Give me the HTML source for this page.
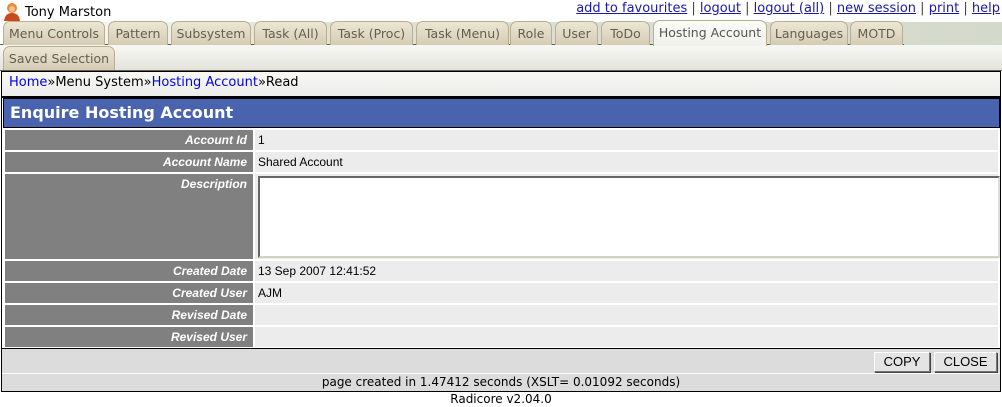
<!DOCTYPE html>
<html><head><style>
*{margin:0;padding:0;box-sizing:border-box}
body{width:1002px;height:407px;background:#fff;position:relative;overflow:hidden;font-family:"DejaVu Sans",Verdana,sans-serif;font-size:12px}
.a{position:absolute}
.tab{position:absolute;height:24px;border:1px solid #b8ae94;border-bottom:none;border-radius:7px 7px 0 0;background:linear-gradient(#ece6d4,#d4ccb4);color:#665e4c;font-size:12.5px;line-height:23px;text-align:center;white-space:nowrap}
.tab.act{background:linear-gradient(#fafaf6,#f2f2ec);color:#555;height:26px}
.lbl{position:absolute;left:5px;width:248px;background:#808080;color:#fff;font:italic bold 12px "Liberation Sans",Arial,sans-serif;text-align:right;padding-right:6px}
.val{position:absolute;left:255px;width:743px;background:#ececec;font:12px "Liberation Sans",Arial,sans-serif;padding-left:3px}
.btn{position:absolute;top:352px;height:20px;border:1px solid #777;border-top-color:#fff;border-left-color:#fff;background:#e4e4e4;box-shadow:1px 1px 0 #444;font:13px "Liberation Sans",Arial,sans-serif;text-align:center;line-height:18px}
a{color:#0000ee}
.tl{color:#1a1aa6;text-decoration:underline}
</style></head><body>
<svg class="a" style="left:3px;top:2px" width="18" height="19" viewBox="0 0 18 19"><circle cx="9" cy="6" r="5" fill="#e88a3a"/><path d="M1 19 Q2 11 9 11 Q16 11 17 19Z" fill="#c84a1c"/><circle cx="9" cy="7" r="3" fill="#f4c08a"/></svg>
<div class="a" style="left:25px;top:5px;font-size:13px">Tony Marston</div>
<div class="a" style="right:2px;top:1px;font-size:13px;color:#444;word-spacing:0"><span class="tl">add to favourites</span> | <span class="tl">logout</span> | <span class="tl">logout (all)</span> | <span class="tl">new session</span> | <span class="tl">print</span> | <span class="tl">help</span></div>
<div class="a" style="left:0;top:22px;width:1002px;height:23px;background:linear-gradient(90deg,#fff,#dfe3d6 30%,#d4dacb)"></div>
<div class="a" style="left:0;top:45px;width:1002px;height:26px;background:linear-gradient(#f7f7f4,#e4e4de);border-bottom:1px solid #6b5e44"></div>
<div class="a" style="left:0;top:44px;width:653px;height:1px;background:#6b5e44"></div>
<div class="a" style="left:767px;top:44px;width:137px;height:1px;background:#6b5e44"></div>
<div class="tab" style="left:3px;top:21px;width:102px">Menu Controls</div>
<div class="tab" style="left:108px;top:21px;width:60px">Pattern</div>
<div class="tab" style="left:171px;top:21px;width:80px">Subsystem</div>
<div class="tab" style="left:254px;top:21px;width:73px">Task (All)</div>
<div class="tab" style="left:330px;top:21px;width:83px">Task (Proc)</div>
<div class="tab" style="left:416px;top:21px;width:93px">Task (Menu)</div>
<div class="tab" style="left:510px;top:21px;width:42px">Role</div>
<div class="tab" style="left:555px;top:21px;width:43px">User</div>
<div class="tab" style="left:601px;top:21px;width:49px">ToDo</div>
<div class="tab act" style="left:653px;top:20px;width:114px">Hosting Account</div>
<div class="tab" style="left:770px;top:21px;width:78px">Languages</div>
<div class="tab" style="left:850px;top:21px;width:53px">MOTD</div>
<div class="tab" style="left:3px;top:46px;width:112px">Saved Selection</div>
<div class="a" style="left:1px;top:71px;width:1000px;height:26px;border:1px solid #000;background:linear-gradient(#f8f8f4,#ececea);font-size:13px;line-height:22px;padding-left:7px"><a>Home</a>»Menu System»<a>Hosting Account</a>»Read</div>
<div class="a" style="left:1px;top:97px;width:1000px;height:295px;border:1px solid #000;background:#fff"></div>
<div class="a" style="left:3px;top:98px;width:997px;height:30px;background:#4a63ae;border:1px solid #000;color:#fff;font-weight:bold;font-size:16px;line-height:28px;padding-left:6px">Enquire Hosting Account</div>
<div class="lbl" style="top:130px;height:20px;line-height:20px">Account Id</div><div class="val" style="top:130px;height:20px;line-height:20px">1</div>
<div class="lbl" style="top:152px;height:20px;line-height:20px">Account Name</div><div class="val" style="top:152px;height:20px;line-height:20px">Shared Account</div>
<div class="lbl" style="top:174px;height:85px;line-height:20px">Description</div><div class="val" style="top:174px;height:85px"></div>
<div class="a" style="left:258px;top:176px;width:742px;height:82px;background:#fff;border:2px solid #666;border-right-color:#ddd;border-bottom-color:#d4d0c0"></div>
<div class="lbl" style="top:261px;height:20px;line-height:20px">Created Date</div><div class="val" style="top:261px;height:20px;line-height:20px">13 Sep 2007 12:41:52</div>
<div class="lbl" style="top:283px;height:20px;line-height:20px">Created User</div><div class="val" style="top:283px;height:20px;line-height:20px">AJM</div>
<div class="lbl" style="top:305px;height:20px;line-height:20px">Revised Date</div><div class="val" style="top:305px;height:20px"></div>
<div class="lbl" style="top:327px;height:20px;line-height:20px">Revised User</div><div class="val" style="top:327px;height:20px"></div>
<div class="a" style="left:2px;top:348px;width:998px;height:1px;background:#000"></div>
<div class="a" style="left:2px;top:349px;width:998px;height:24px;background:#dcdcdc"></div>
<div class="btn" style="left:874px;width:56px">COPY</div>
<div class="btn" style="left:934px;width:63px">CLOSE</div>
<div class="a" style="left:2px;top:374px;width:998px;height:17px;background:#dcdcdc;text-align:center;line-height:17px">page created in 1.47412 seconds (XSLT= 0.01092 seconds)</div>
<div class="a" style="left:0;top:392px;width:1002px;text-align:center;line-height:15px">Radicore v2.04.0</div>
</body></html>
